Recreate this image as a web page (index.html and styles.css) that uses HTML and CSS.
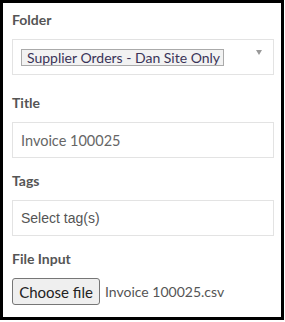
FILE: index.html
```html
<!DOCTYPE html>
<html lang="en">
<head>
  <meta charset="UTF-8" />
  <meta name="viewport" content="width=device-width, initial-scale=1.0"/>
  <title>Upload Document</title>
  <link rel="stylesheet" href="styles.css">
</head>
<body>
  <form class="panel">
    <div class="field field-folder">
      <label class="label">Folder</label>
      <div class="select">
        <span class="chip">Supplier Orders - Dan Site Only</span>
        <span class="caret"></span>
      </div>
    </div>

    <div class="field">
      <label class="label" for="title">Title</label>
      <input class="input" id="title" type="text" value="Invoice 100025">
    </div>

    <div class="field">
      <label class="label" for="tags">Tags</label>
      <input class="input input-tags" id="tags" type="text" placeholder="Select tag(s)">
    </div>

    <div class="field">
      <label class="label">File Input</label>
      <div class="file">
        <button type="button" class="file-btn">Choose file</button>
        <span class="file-name">Invoice 100025.csv</span>
      </div>
    </div>
  </form>
</body>
</html>
```

FILE: styles.css
```css
body {
  margin: 0;
  background: #fff;
  font-family: Lato, 'Open Sans', sans-serif;
}
.panel {
  box-sizing: border-box;
  width: 284px;
  height: 320px;
  border: 3px solid #000;
  padding: 8px 7px 0 9px;
}
.field {
  margin-bottom: 14px;
}
.field-folder {
  margin-bottom: 19px;
}
.label {
  display: block;
  font-size: 14px;
  font-weight: bold;
  line-height: 18px;
  color: #555;
  margin-bottom: 10px;
}
.select {
  box-sizing: border-box;
  height: 36px;
  border: 1px solid #e3e3e3;
  display: flex;
  align-items: center;
  padding: 0 11px 0 8px;
}
.chip {
  box-sizing: border-box;
  height: 17px;
  line-height: 15px;
  padding: 0 3px 0 5px;
  border: 1px solid #aaa;
  background: #f2f2f2;
  color: #3a3458;
  font-size: 14px;
  white-space: nowrap;
}
.caret {
  margin-left: auto;
  align-self: flex-start;
  margin-top: 10px;
  width: 0;
  height: 0;
  border-left: 3.5px solid transparent;
  border-right: 3.5px solid transparent;
  border-top: 5px solid #999;
}
.input {
  display: block;
  box-sizing: border-box;
  width: 100%;
  height: 36px;
  margin: 0;
  border: 1px solid #e3e3e3;
  border-radius: 0;
  padding: 0 8px;
  font-family: Lato, sans-serif;
  font-size: 14.5px;
  color: #666;
  outline: none;
}
.input-tags {
  font-family: 'Liberation Sans', Arial, sans-serif;
  font-size: 14px;
}
.input-tags::placeholder {
  color: #555;
}
.file {
  display: flex;
  align-items: center;
}
.file-btn {
  box-sizing: border-box;
  height: 27px;
  width: 88px;
  padding: 0;
  margin: 0 5px 0 0;
  background: #efefef;
  border: 1px solid #767676;
  border-radius: 3px;
  font-family: Lato, sans-serif;
  font-size: 15px;
  color: #222;
}
.file-name {
  font-size: 14px;
  color: #555;
}
```
